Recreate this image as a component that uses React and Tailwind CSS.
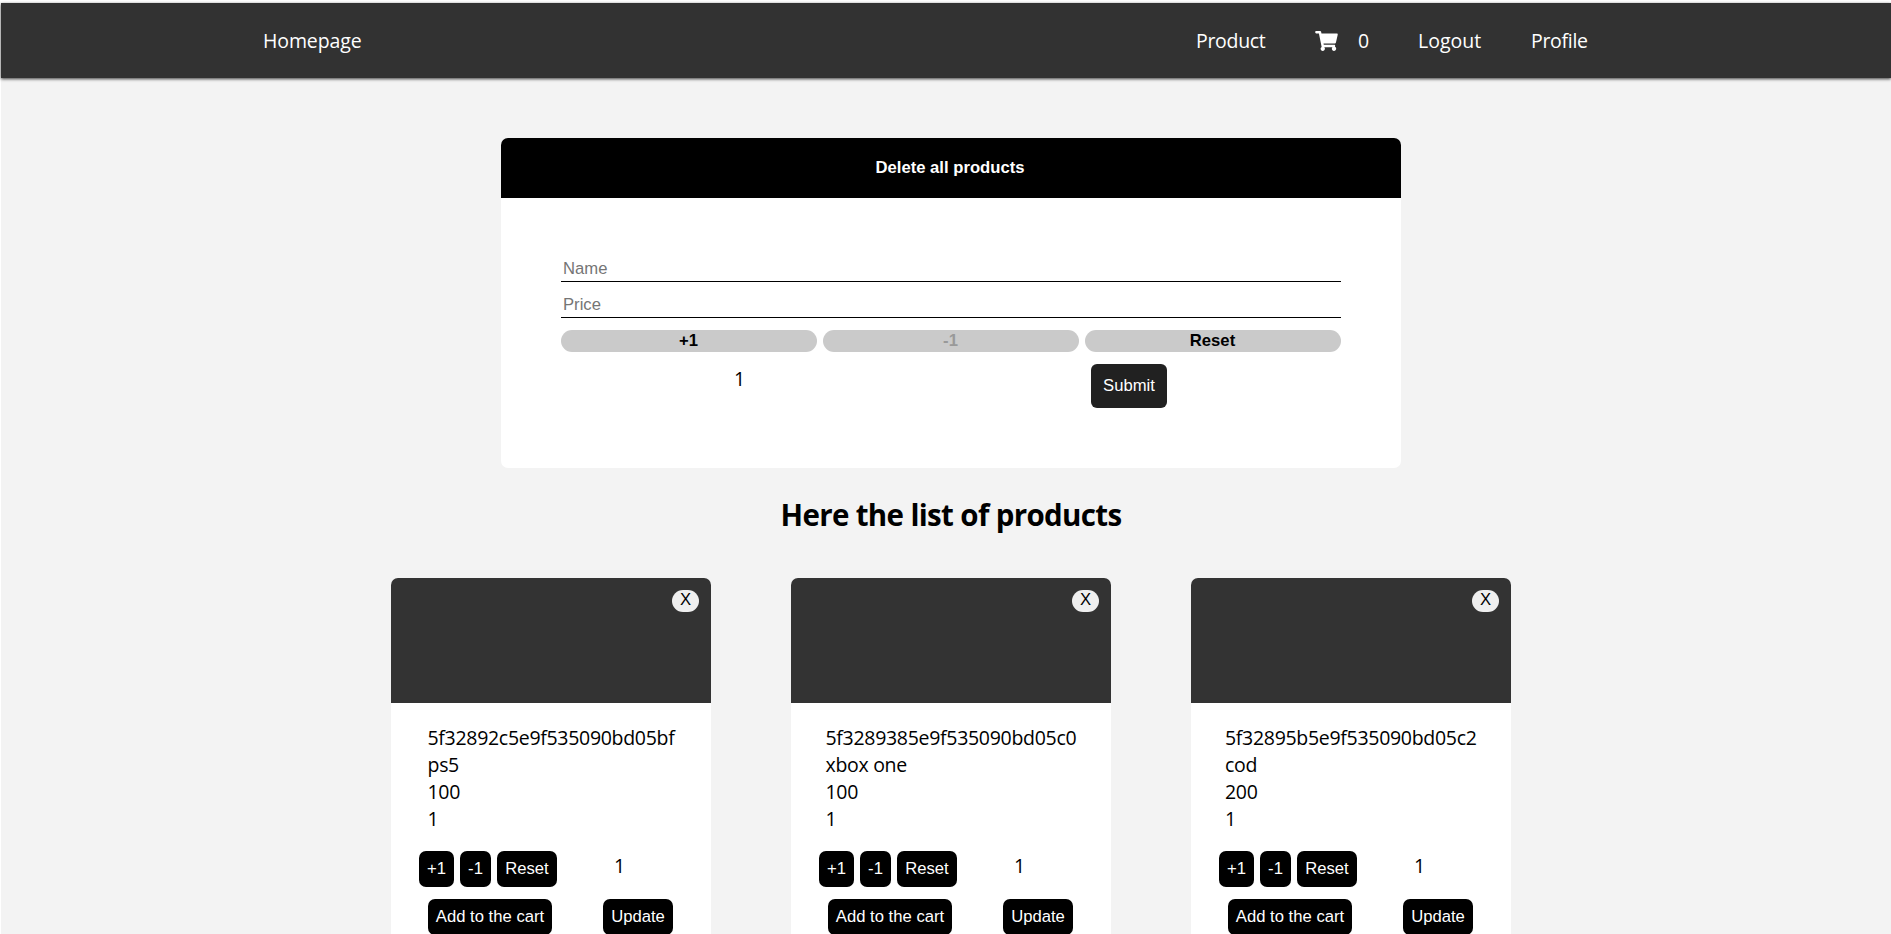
import { FaShoppingCart } from "react-icons/fa";

const products = [
  { id: "5f32892c5e9f535090bd05bf", name: "ps5", price: 100, quantity: 1, width: "w-[247px]" },
  { id: "5f3289385e9f535090bd05c0", name: "xbox one", price: 100, quantity: 1, width: "w-[251px]" },
  { id: "5f32895b5e9f535090bd05c2", name: "cod", price: 200, quantity: 1, width: "w-[252px]" },
];

const arial = "font-['Liberation_Sans',Arial,sans-serif] text-[16.67px] tracking-normal";

function Header() {
  return (
    <header className="relative flex h-[75px] items-center bg-[#323232] pl-[262px] text-white shadow-[0_1px_3px_rgba(0,0,0,0.75)]">
      <a className="w-[933px] pt-px tracking-[-0.1px]">Homepage</a>
      <nav className="flex items-center">
        <a className="w-[119px] pt-px">Product</a>
        <a className="flex w-[103px] items-center">
          <FaShoppingCart className="mr-5 h-5 w-[23px]" />
          <span className="pt-px">0</span>
        </a>
        <a className="w-[113px] pt-px tracking-[0px]">Logout</a>
        <a className="pt-px">Profile</a>
      </nav>
    </header>
  );
}

function CreateForm() {
  return (
    <section className="mx-auto mt-[60px] h-[330px] w-[900px] overflow-hidden rounded-[7px] bg-white">
      <button className={`${arial} block h-[60px] w-full bg-black pr-[2px] pb-[2px] font-bold text-white`}>
        Delete all products
      </button>
      <form className="px-[60px] pt-[59px]">
        <input
          placeholder="Name"
          className={`${arial} block h-[25px] w-full border-b border-black px-[2px] placeholder:text-[#757575]`}
        />
        <input
          placeholder="Price"
          className={`${arial} mt-[11px] block h-[25px] w-full border-b border-black px-[2px] placeholder:text-[#757575]`}
        />
        <div className="mt-3 grid grid-cols-3 gap-[6px]">
          {["+1", "-1", "Reset"].map((label) => (
            <button
              key={label}
              type="button"
              disabled={label === "-1"}
              className={`${arial} h-[22px] rounded-[12px] bg-[#cacaca] pr-px pb-[2px] leading-[19px] font-bold text-black disabled:text-[#999999]`}
            >
              {label}
            </button>
          ))}
        </div>
        <div className="mt-3 flex justify-around">
          <span className="leading-[29px]">1</span>
          <button type="button" className={`${arial} mr-px h-11 w-[76px] rounded-[6px] bg-[#212121] pb-[2px] text-white`}>
            Submit
          </button>
        </div>
      </form>
    </section>
  );
}

function ProductCard({ product }) {
  const button = `${arial} h-9 rounded-[7px] bg-black pb-[2px] text-white`;
  return (
    <article className="h-[400px] w-[320px] overflow-hidden rounded-[7px] bg-white">
      <div className="flex h-[125px] justify-end bg-[#333333] pt-3 pr-3">
        <button className={`${arial} h-[22px] w-[27px] rounded-[12px] bg-[#efefef] pb-[2px] leading-[20px] text-black`}>
          X
        </button>
      </div>
      <div className={`${product.width} mx-auto mt-[21px] leading-[27px]`}>
        <p className="whitespace-nowrap">{product.id}</p>
        <p>{product.name}</p>
        <p>{product.price}</p>
        <p>{product.quantity}</p>
      </div>
      <div className="mt-[19px] flex pl-7">
        <div className="flex w-[195px] gap-[6px]">
          <button className={`${button} w-[35px]`}>+1</button>
          <button className={`${button} w-[31px]`}>-1</button>
          <button className={`${button} w-[60px]`}>Reset</button>
        </div>
        <span className="leading-[29px]">1</span>
      </div>
      <div className="mt-3 flex gap-[51px] pl-[37px]">
        <button className={`${button} w-[124px]`}>Add to the cart</button>
        <button className={`${button} w-[70px]`}>Update</button>
      </div>
    </article>
  );
}

export default function App() {
  return (
    <div className="h-[934px] overflow-hidden bg-white pt-[3px] pl-px font-['Open_Sans','Noto_Sans',sans-serif] text-[19.5px] tracking-[-0.3px] text-black">
      <div className="h-full bg-[#f3f3f3]">
        <Header />
        <main className="w-[1900px]">
          <CreateForm />
          <h1 className="mt-[27px] text-center text-[29.5px] leading-10 font-bold tracking-[-0.65px]">
            Here the list of products
          </h1>
          <div className="mt-[43px] flex justify-center gap-20">
            {products.map((product) => (
              <ProductCard key={product.id} product={product} />
            ))}
          </div>
        </main>
      </div>
    </div>
  );
}
